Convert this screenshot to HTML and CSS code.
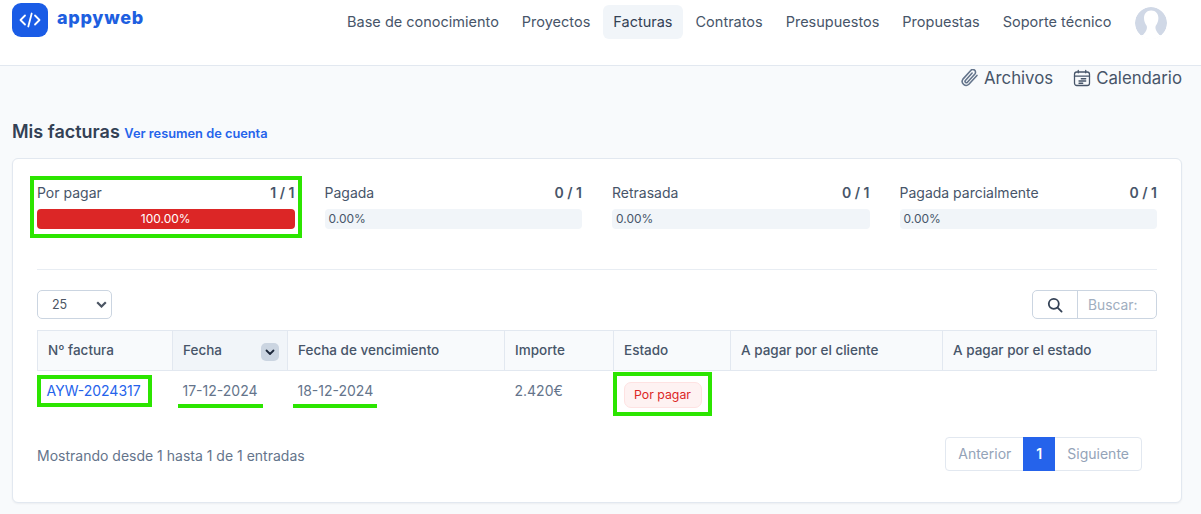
FILE: index.html
```html
<!DOCTYPE html>
<html lang="es">
<head>
<meta charset="utf-8">
<title>Mis facturas</title>
<link rel="stylesheet" href="styles.css">
</head>
<body>
<header class="topbar">
  <a class="brand">
    <span class="brand-mark">
      <svg width="22" height="16" viewBox="0 0 22 16" fill="none" stroke="#fff" stroke-width="1.8" stroke-linecap="round" stroke-linejoin="round"><path d="M6 3.5 1.5 8 6 12.5"/><path d="M16 3.5 20.5 8 16 12.5"/><path d="M12.7 1.5 9.3 14.5"/></svg>
    </span>
    <span class="brand-name">appyweb</span>
  </a>
  <nav class="nav">
    <a class="nav-item">Base de conocimiento</a>
    <a class="nav-item">Proyectos</a>
    <a class="nav-item active">Facturas</a>
    <a class="nav-item">Contratos</a>
    <a class="nav-item">Presupuestos</a>
    <a class="nav-item">Propuestas</a>
    <a class="nav-item">Soporte técnico</a>
    <span class="avatar">
      <svg width="32" height="32" viewBox="0 0 32 32"><circle cx="16" cy="16" r="16" fill="#d0d8e6"/><path d="M16 3.500c-4.300 0-7 3.200-7 7.500 0 3 1 5.600 2.300 7.200.8 1 .8 2.600.3 4.300-.5 1.700-2 3.700-3.600 5.500V32h16.400v-4c-1.600-1.800-3.100-3.800-3.600-5.500-.5-1.700-.5-3.300.3-4.300 1.300-1.600 2.300-4.200 2.300-7.200 0-4.300-2.700-7.500-7-7.500Z" fill="#fff"/><rect x="0" y="28" width="32" height="4" fill="#fff"/></svg>
    </span>
  </nav>
</header>

<main class="page">
  <div class="quick-links">
    <a class="quick-link">
      <svg width="19" height="19" viewBox="0 0 24 24" fill="none" stroke="#64748b" stroke-width="2" stroke-linecap="round" stroke-linejoin="round"><path d="m21.400 8.100-10.200 11.200a5 5 0 0 1-7.500-6.500l9.900-11a3.400 3.400 0 0 1 5.200 4.400l-9.400 10.500a1.700 1.700 0 0 1-2.600-2.200l8.500-9.400"/></svg>
      Archivos
    </a>
    <a class="quick-link">
      <svg width="18" height="18" viewBox="0 0 24 24" fill="none" stroke="#475569" stroke-width="1.700" stroke-linecap="round" stroke-linejoin="round"><rect x="2" y="4" width="20" height="18" rx="3"/><path d="M2 9.500h20M7 1.800V5M17 1.800V5M11 13h6M8 16h9M8 19h5"/></svg>
      Calendario
    </a>
  </div>

  <h1 class="page-title">Mis facturas <a class="title-link">Ver resumen de cuenta</a></h1>

  <section class="card">
    <div class="stats">
      <div class="stat stat-marked">
        <div class="stat-head"><span>Por pagar</span><b>1 / 1</b></div>
        <div class="bar bar-full">100.00%</div>
      </div>
      <div class="stat">
        <div class="stat-head"><span>Pagada</span><b>0 / 1</b></div>
        <div class="bar">0.00%</div>
      </div>
      <div class="stat">
        <div class="stat-head"><span>Retrasada</span><b>0 / 1</b></div>
        <div class="bar">0.00%</div>
      </div>
      <div class="stat">
        <div class="stat-head"><span>Pagada parcialmente</span><b>0 / 1</b></div>
        <div class="bar">0.00%</div>
      </div>
    </div>

    <hr class="divider">

    <div class="controls">
      <div class="select">
        <span>25</span>
        <svg width="11" height="7" viewBox="0 0 11 7" fill="none" stroke="#4b5563" stroke-width="2.200"><path d="m1.200 1.200 4.300 4.300 4.300-4.300"/></svg>
      </div>
      <div class="search">
        <span class="search-icon">
          <svg width="16" height="16" viewBox="0 0 16 16" fill="none" stroke="#334155" stroke-width="1.800" stroke-linecap="round"><circle cx="6.800" cy="6.800" r="5"/><path d="m10.600 10.600 4 4"/></svg>
        </span>
        <span class="search-label">Buscar:</span>
      </div>
    </div>

    <table class="invoices">
      <colgroup>
        <col class="c1"><col class="c2"><col class="c3"><col class="c4"><col class="c5"><col class="c6"><col class="c7">
      </colgroup>
      <thead>
        <tr>
          <th>Nº factura</th>
          <th class="sorted">Fecha
            <span class="sort-btn"><svg width="10" height="7" viewBox="0 0 10 7" fill="none" stroke="#1e293b" stroke-width="1.800" stroke-linecap="round" stroke-linejoin="round"><path d="m1.500 1.500 3.500 3.500 3.500-3.500"/></svg></span>
          </th>
          <th>Fecha de vencimiento</th>
          <th>Importe</th>
          <th>Estado</th>
          <th>A pagar por el cliente</th>
          <th>A pagar por el estado</th>
        </tr>
      </thead>
      <tbody>
        <tr>
          <td class="cell-first"><a class="inv-link">AYW-2024317</a><span class="mark-box"></span></td>
          <td>17-12-2024<span class="mark-line line-a"></span></td>
          <td>18-12-2024<span class="mark-line line-b"></span></td>
          <td>2.420€</td>
          <td class="cell-status"><span class="badge">Por pagar</span><span class="mark-status"></span></td>
          <td></td>
          <td></td>
        </tr>
      </tbody>
    </table>

    <div class="footer-row">
      <span class="info">Mostrando desde 1 hasta 1 de 1 entradas</span>
      <div class="pager">
        <a class="pager-item">Anterior</a>
        <a class="pager-item current">1</a>
        <a class="pager-item">Siguiente</a>
      </div>
    </div>
  </section>
</main>
</body>
</html>
```

FILE: styles.css
```css
* { box-sizing: border-box; }

html, body {
  margin: 0;
  height: 514px;
  overflow: hidden;
}

body {
  background: #f8fafc;
  font-family: Inter, "Liberation Sans", sans-serif;
  font-size: 14px;
  color: #475569;
}

.topbar {
  height: 66px;
  background: #fff;
  border-bottom: 1px solid #e2e8f0;
  padding: 3px 34px 0 12px;
  display: flex;
  justify-content: space-between;
  align-items: flex-start;
}

.brand {
  display: flex;
  align-items: flex-start;
  gap: 9px;
}

.brand-mark {
  width: 36px;
  height: 34px;
  border-radius: 9px;
  background: #1a5ce6;
  display: flex;
  align-items: center;
  justify-content: center;
}

.brand-name {
  font-family: Inter, sans-serif;
  font-weight: 800;
  font-size: 18px;
  line-height: 30px;
  color: #1e5fe0;
  letter-spacing: 0.7px;
}

.nav {
  display: flex;
  align-items: flex-start;
  margin-top: 2px;
}

.nav-item {
  height: 34px;
  line-height: 34px;
  padding: 0 11.500px;
  font-size: 14.500px;
  color: #475569;
  border-radius: 6px;
}

.nav-item.active {
  background: #f1f5f9;
  color: #334155;
  padding: 0 10.500px;
  margin: 0 1px;
}

.avatar {
  width: 32px;
  height: 32px;
  margin: 2px 0 0 12px;
  border-radius: 50%;
  overflow: hidden;
}

.page {
  padding: 0 19px 0 12px;
}

.quick-links {
  display: flex;
  justify-content: flex-end;
  gap: 20px;
  height: 24px;
  align-items: center;
  margin-bottom: 30px;
}

.quick-link {
  display: flex;
  align-items: center;
  gap: 5px;
  font-size: 16.800px;
  color: #475569;
}

.page-title {
  margin: 0 0 12px;
  font-size: 18px;
  line-height: 24px;
  font-weight: 600;
  color: #334155;
}

.title-link {
  font-size: 12.800px;
  color: #2563eb;
}

.card {
  height: 345px;
  background: #fff;
  border: 1px solid #e2e8f0;
  border-radius: 6px;
  padding: 24px;
  box-shadow: 0 1px 2px rgba(15, 23, 42, 0.05);
}

.stats {
  display: grid;
  grid-template-columns: repeat(4, 1fr);
  column-gap: 30px;
}

.stat-head {
  display: flex;
  justify-content: space-between;
  line-height: 20px;
  margin-bottom: 6px;
  font-size: 14px;
  color: #475569;
}

.stat-head b {
  font-weight: 600;
}

.stat-marked {
  outline: 4px solid #2ce500;
  outline-offset: 3px;
  padding-bottom: 2px;
  margin-bottom: -2px;
}

.bar {
  height: 20px;
  line-height: 20px;
  background: #f1f5f9;
  border-radius: 4px;
  padding-left: 4px;
  font-size: 12px;
  color: #475569;
}

.bar-full {
  background: #dc2626;
  color: #fff;
  text-align: center;
  padding-left: 0;
}

.divider {
  border: 0;
  border-top: 1px solid #e8edf3;
  margin: 40px 0 20px;
}

.controls {
  display: flex;
  justify-content: space-between;
  margin-bottom: 11px;
}

.select {
  width: 75px;
  height: 29px;
  border: 1px solid #cbd5e1;
  border-radius: 5px;
  display: flex;
  justify-content: space-between;
  align-items: center;
  padding: 0 4px 0 14px;
  font-size: 12.500px;
  color: #4b5563;
}

.search {
  width: 125px;
  height: 29px;
  border: 1px solid #cbd5e1;
  border-radius: 5px;
  display: flex;
}

.search-icon {
  width: 45px;
  display: flex;
  align-items: center;
  justify-content: center;
  border-right: 1px solid #cbd5e1;
}

.search-label {
  padding-left: 10px;
  line-height: 28px;
  font-size: 13.800px;
  color: #a0aec0;
}

.invoices {
  width: 1119px;
  table-layout: fixed;
  border-collapse: collapse;
  font-size: 13.500px;
}

.c1 { width: 135px; }
.c2 { width: 115px; }
.c3 { width: 217px; }
.c4 { width: 109px; }
.c5 { width: 117px; }
.c6 { width: 212px; }
.c7 { width: 214px; }

.invoices th {
  height: 40px;
  padding: 0 10px 2px;
  text-align: left;
  font-weight: 500;
  color: #475569;
  background: #f8fafc;
  border: 1px solid #e2e8f0;
  position: relative;
}

.invoices th.sorted {
  background: #f1f5f9;
}

.sort-btn {
  position: absolute;
  right: 8px;
  top: 12px;
  width: 18px;
  height: 18px;
  border-radius: 5px;
  background: #cbd5e1;
  display: flex;
  align-items: center;
  justify-content: center;
}

.invoices td {
  height: 45px;
  padding: 0 10px 6px;
  position: relative;
  color: #64748b;
  font-size: 14px;
}

.inv-link {
  color: #2563eb;
  margin-left: -1px;
}

.mark-box {
  position: absolute;
  left: -1px;
  top: 4px;
  width: 115px;
  height: 32px;
  border: 4px solid #2ce500;
}

.mark-line {
  position: absolute;
  top: 33px;
  height: 4px;
  background: #2ce500;
}

.line-a { left: 5px; width: 85px; }
.line-b { left: 5px; width: 84px; }

.invoices td.cell-status {
  padding: 3px 10px 0;
}

.badge {
  display: inline-block;
  width: 78px;
  height: 26px;
  line-height: 24px;
  font-size: 12.300px;
  text-align: center;
  color: #dc2626;
  background: #fef2f2;
  border: 1px solid #fee2e2;
  border-radius: 7px;
}

.mark-status {
  position: absolute;
  left: -1px;
  top: 1px;
  width: 99px;
  height: 44px;
  border: 4px solid #2ce500;
}

.footer-row {
  display: flex;
  justify-content: space-between;
  align-items: center;
  margin-top: 21px;
  padding-right: 15px;
}

.info {
  padding-top: 4px;
  font-size: 14px;
  color: #64748b;
}

.pager {
  height: 34px;
  display: flex;
  border: 1px solid #e2e8f0;
  border-radius: 4px;
}

.pager-item {
  padding: 0 12px;
  line-height: 32px;
  font-size: 14px;
  color: #94a3b8;
}

.pager-item.current {
  background: #2563eb;
  color: #fff;
  font-weight: 600;
  width: 32px;
  height: 34px;
  margin-top: -1px;
  line-height: 34px;
  padding: 0;
  text-align: center;
}
```
